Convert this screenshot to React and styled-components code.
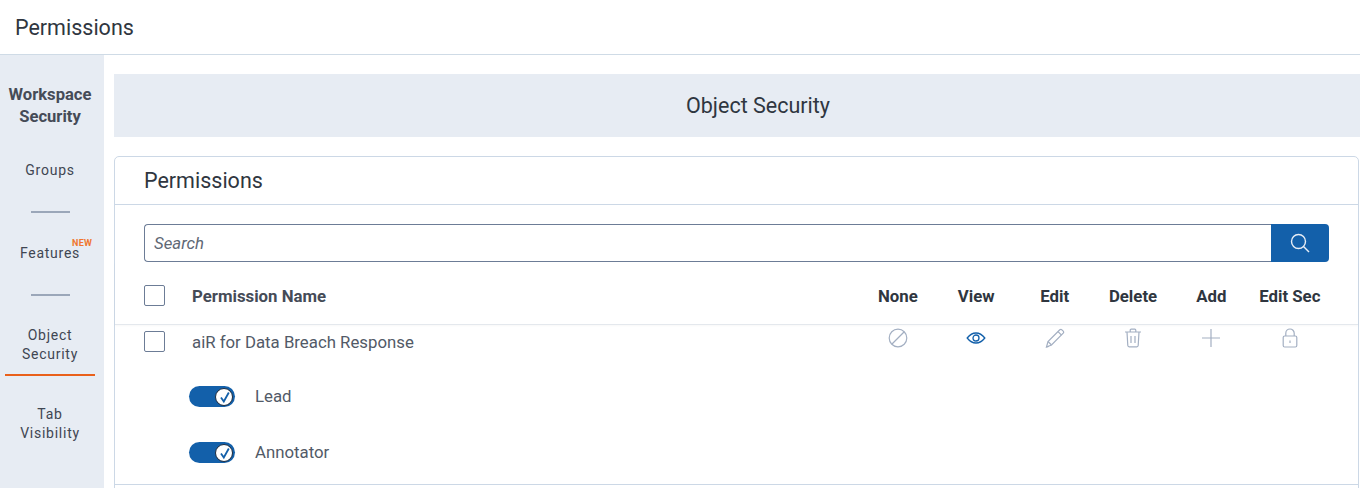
import styled, { createGlobalStyle } from "styled-components";

const GlobalStyle = createGlobalStyle`
    html, body {
        margin: 0;
        padding: 0;
        height: 488px;
        overflow: hidden;
        background: #fff;
        font-family: Roboto, "Liberation Sans", sans-serif;
    }
    * { box-sizing: border-box; }
`;

const Page = styled.div`
    width: 1360px;
    height: 488px;
    display: flex;
    flex-direction: column;
    overflow: hidden;
`;

const TopBar = styled.header`
    height: 55px;
    flex: none;
    padding: 14px 0 0 15px;
    font-size: 21.5px;
    line-height: 27px;
    color: #2f3640;
    border-bottom: 1px solid #cfdbe6;
`;

const Body = styled.div`
    flex: 1;
    display: flex;
    min-height: 0;
`;

const Sidebar = styled.nav`
    width: 104px;
    flex: none;
    background: #e7ecf3;
    padding: 29px 4px 0 0;
    display: flex;
    flex-direction: column;
    align-items: center;
`;

const SideTitle = styled.div`
    font-size: 16.6px;
    font-weight: 700;
    line-height: 22px;
    text-align: center;
    color: #454b57;
    margin-bottom: 33px;
`;

const SideItem = styled.div`
    position: relative;
    width: 90px;
    flex: none;
    text-align: center;
    font-size: 14px;
    line-height: 19px;
    letter-spacing: 0.75px;
    color: #3f4652;
    padding-bottom: ${(props) => props.$active ? "10px" : "0"};
    border-bottom: ${(props) => props.$active ? "2px solid #e9601a" : "none"};
    margin-bottom: ${(props) => props.$gap}px;
`;

const NewBadge = styled.span`
    position: absolute;
    top: -6px;
    right: 3px;
    font-size: 9px;
    line-height: 11px;
    font-weight: 700;
    letter-spacing: 0.2px;
    color: #f0762e;
`;

const SideRule = styled.div`
    width: 39px;
    height: 2px;
    flex: none;
    background: #9ba7b9;
    margin-bottom: ${(props) => props.$gap}px;
`;

const Main = styled.main`
    flex: 1;
    min-width: 0;
    padding: 19px 1px 0 10px;
`;

const Banner = styled.div`
    height: 63px;
    margin-right: -1px;
    padding-left: 42px;
    background: #e7ecf3;
    display: flex;
    align-items: center;
    justify-content: center;
    font-size: 21.5px;
    color: #2f3640;
`;

const Card = styled.section`
    margin-top: 19px;
    height: 360px;
    border: 1px solid #ccd8e6;
    border-radius: 5px 5px 0 0;
`;

const CardTitle = styled.h2`
    margin: 0;
    height: 48px;
    padding: 9px 0 0 29px;
    font-size: 21.5px;
    line-height: 29px;
    font-weight: 400;
    color: #2f3640;
    border-bottom: 1px solid #ccd8e6;
`;

const SearchRow = styled.div`
    display: flex;
    margin: 19px 29px 0;
    height: 38px;
`;

const SearchInput = styled.input`
    flex: 1;
    min-width: 0;
    height: 38px;
    padding: 0 9px;
    border: 1px solid #6c7c96;
    border-right: none;
    border-radius: 4px 0 0 4px;
    font: italic 16.8px Roboto, sans-serif;
    color: #333;
    outline: none;

    &::placeholder {
        color: #5f6875;
        opacity: 1;
    }
`;

const SearchButton = styled.button`
    width: 58px;
    height: 38px;
    flex: none;
    border: none;
    padding: 0;
    background: #1360aa;
    border-radius: 0 4px 4px 0;
    display: flex;
    align-items: center;
    justify-content: center;
`;

const TableRow = styled.div`
    display: grid;
    grid-template-columns: 21px 1fr repeat(6, 78.4px);
    padding: 0 29px;
`;

const HeadRow = styled(TableRow)`
    height: 63px;
    align-items: center;
    padding-top: 5px;
    border-bottom: 1px solid #e4e8ed;
    box-shadow: 0 1px 2px rgba(0, 0, 0, 0.03);
`;

const BodyRow = styled(TableRow)`
    padding-top: 6px;
    align-items: start;
`;

const Check = styled.div`
    width: 21px;
    height: 21px;
    border: 1px solid #6c7c96;
    border-radius: 2px;
    background: #fff;
`;

const NameHead = styled.div`
    padding-left: 27px;
    font-size: 16.8px;
    font-weight: 700;
    color: #454b57;
`;

const NameCell = styled.div`
    padding-left: 27px;
    font-size: 16.8px;
    line-height: 23px;
    color: #525a67;
`;

const ColHead = styled.div`
    text-align: center;
    font-size: 16.8px;
    font-weight: 700;
    color: #2f3640;
    white-space: nowrap;
`;

const IconCell = styled.div`
    height: 14px;
    display: flex;
    align-items: center;
    justify-content: center;
`;

const RoleGroup = styled.div`
    height: 131px;
    padding: 31px 0 0 74px;
    display: flex;
    flex-direction: column;
    gap: 35px;
    border-bottom: 1px solid #ccd8e6;
`;

const Role = styled.div`
    display: flex;
    align-items: center;
    gap: 20px;
    height: 21px;
    font-size: 16.8px;
    color: #525a67;
`;

const Toggle = styled.div`
    position: relative;
    width: 46px;
    height: 21px;
    margin-top: 2px;
    border-radius: 11px;
    background: #1360aa;
`;

const Knob = styled.span`
    position: absolute;
    top: 2px;
    right: 2px;
    width: 18px;
    height: 18px;
    border-radius: 50%;
    background: #fff;
    border: 1.5px solid #1d2a3c;
    display: flex;
    align-items: center;
    justify-content: center;
`;

const muted = { fill: "none", stroke: "#a3afc2", strokeWidth: 1.2 };

const NoneIcon = () => (
    <svg width="20" height="20" viewBox="0 0 20 20" {...muted}>
        <circle cx="10" cy="10" r="8.8" />
        <path d="M4 16 16 4" />
    </svg>
);

const ViewIcon = () => (
    <svg width="20" height="14" viewBox="0 0 20 14" fill="none" stroke="#1360aa" strokeWidth="1.3">
        <path d="M1.2 7C4 3.4 7 2 10 2s6 1.4 8.8 5c-2.8 3.6-5.800 5-8.800 5s-6-1.400-8.800-5z" />
        <circle cx="10" cy="7" r="3" />
    </svg>
);

const EditIcon = () => (
    <svg width="20" height="20" viewBox="0 0 20 20" {...muted}>
        <path d="M1.500 19 3 13.500 14.800 1.800c.7-.6 1.500-.6 2.100 0l1.300 1.300c.6.7.6 1.400 0 2.100L6.500 17z" />
        <path d="M3 13.500 6.500 17M13 3.600l3.500 3.500M1.500 19l2.300-.6" />
    </svg>
);

const TrashIcon = () => (
    <svg width="18" height="20" viewBox="0 0 18 20" {...muted}>
        <path d="M1 4h16M6.200 4V2.300c0-.7.4-1.100 1-1.100h3.600c.6 0 1 .4 1 1.100V4" />
        <path d="M3 4l.8 13.500c.1.800.5 1.300 1.300 1.300h7.800c.8 0 1.200-.5 1.300-1.300L15 4" />
        <path d="M7 8v7M11 8v7" />
    </svg>
);

const PlusIcon = () => (
    <svg width="20" height="20" viewBox="0 0 20 20" {...muted}>
        <path d="M10 1v18M1 10h18" />
    </svg>
);

const LockIcon = () => (
    <svg width="16" height="20" viewBox="0 0 16 20" {...muted}>
        <rect x="1.200" y="8" width="13.600" height="11" rx="1.500" />
        <path d="M3.800 8V5.200a4.200 4.200 0 0 1 8.400 0V8" />
        <path d="M8 12.500v2.500" />
    </svg>
);

const SearchIcon = () => (
    <svg width="20" height="20" viewBox="0 0 20 20" fill="none" stroke="#e8eef6" strokeWidth="1.400">
        <circle cx="8.500" cy="8.500" r="7" />
        <path d="m13.500 13.500 5.500 5.500" />
    </svg>
);

const CheckMark = () => (
    <svg width="13" height="13" viewBox="0 0 13 13" fill="none" stroke="#1360aa" strokeWidth="1.800">
        <path d="M3 6.500 5.800 10.500 10.800 1.500" />
    </svg>
);

const columns = ["None", "View", "Edit", "Delete", "Add", "Edit Sec"];
const icons = [NoneIcon, ViewIcon, EditIcon, TrashIcon, PlusIcon, LockIcon];
const roles = ["Lead", "Annotator"];

const App = () => {
    return (
        <Page>
            <GlobalStyle />
            <TopBar>Permissions</TopBar>
            <Body>
                <Sidebar>
                    <SideTitle>Workspace<br />Security</SideTitle>
                    <SideItem $gap={31}>Groups</SideItem>
                    <SideRule $gap={31} />
                    <SideItem $gap={31}>
                        Features
                        <NewBadge>NEW</NewBadge>
                    </SideItem>
                    <SideRule $gap={30} />
                    <SideItem $active $gap={29}>Object<br />Security</SideItem>
                    <SideItem $gap={43}>Tab<br />Visibility</SideItem>
                    <SideItem $gap={0}>Audit</SideItem>
                </Sidebar>
                <Main>
                    <Banner>Object Security</Banner>
                    <Card>
                        <CardTitle>Permissions</CardTitle>
                        <SearchRow>
                            <SearchInput placeholder="Search" readOnly />
                            <SearchButton aria-label="Search">
                                <SearchIcon />
                            </SearchButton>
                        </SearchRow>
                        <HeadRow>
                            <Check />
                            <NameHead>Permission Name</NameHead>
                            {columns.map((col) => (
                                <ColHead key={col}>{col}</ColHead>
                            ))}
                        </HeadRow>
                        <BodyRow>
                            <Check />
                            <NameCell>aiR for Data Breach Response</NameCell>
                            {icons.map((Icon, idx) => (
                                <IconCell key={idx}>
                                    <Icon />
                                </IconCell>
                            ))}
                        </BodyRow>
                        <RoleGroup>
                            {roles.map((role) => (
                                <Role key={role}>
                                    <Toggle>
                                        <Knob>
                                            <CheckMark />
                                        </Knob>
                                    </Toggle>
                                    {role}
                                </Role>
                            ))}
                        </RoleGroup>
                    </Card>
                </Main>
            </Body>
        </Page>
    );
};

export default App;
